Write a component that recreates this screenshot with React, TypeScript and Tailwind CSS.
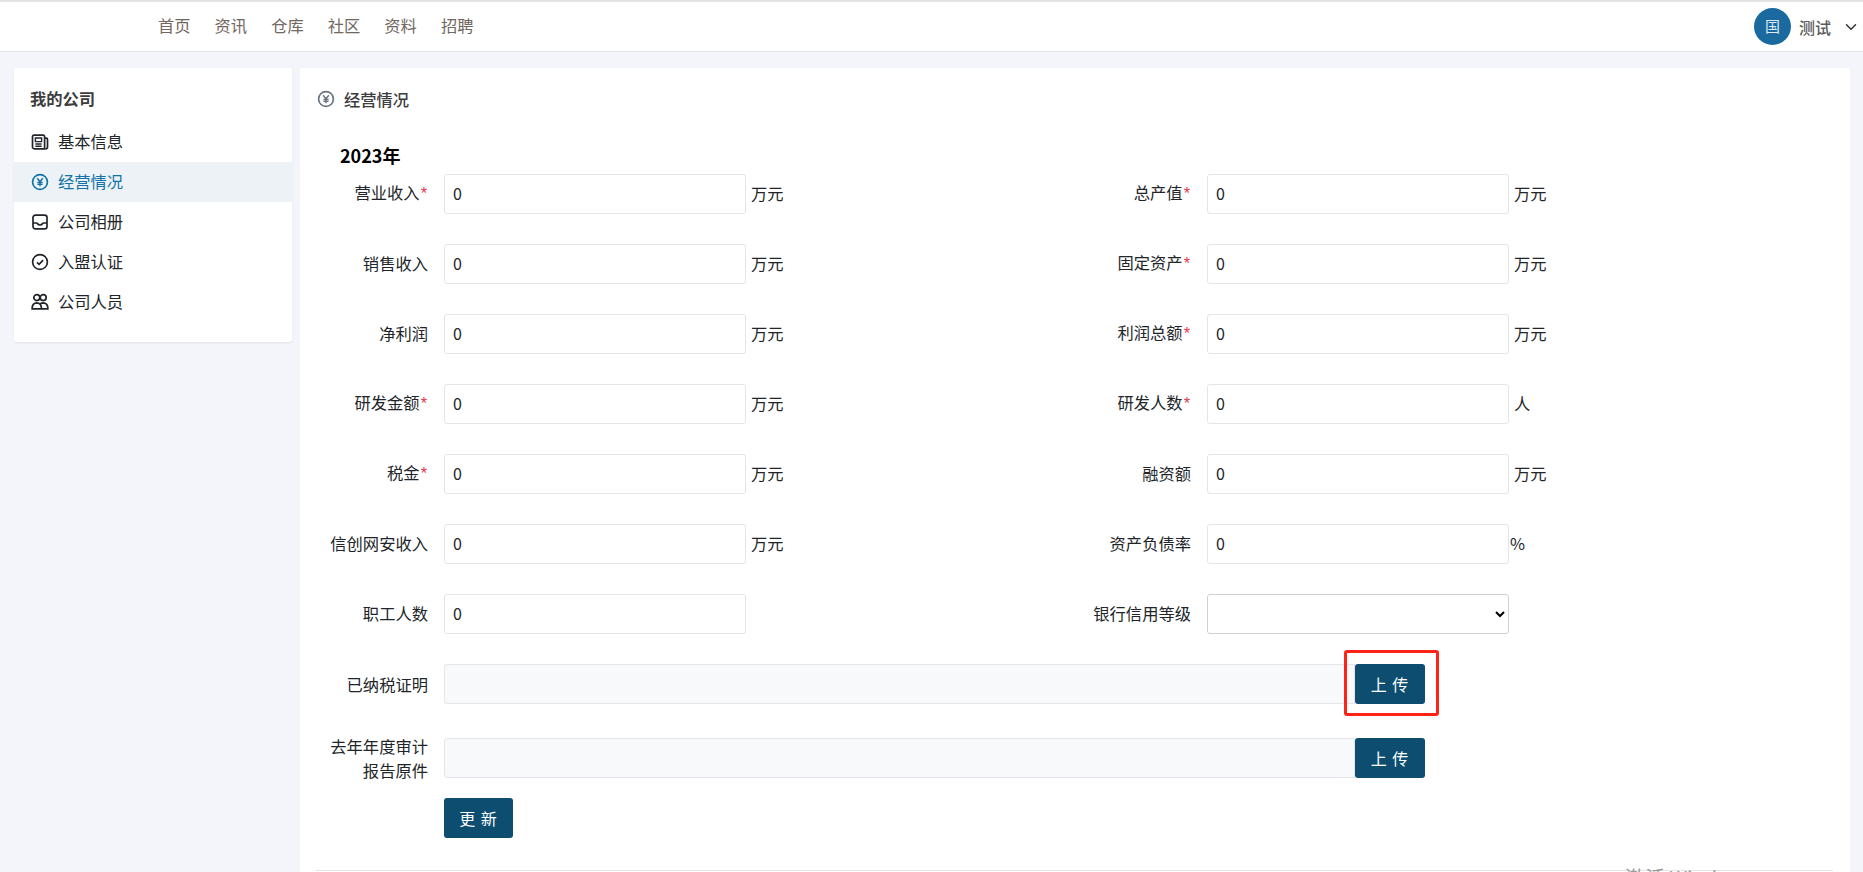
import { ChevronDown } from "lucide-react";

const cjk = "font-['Noto_Sans_CJK_SC','Open_Sans',sans-serif]";

const navItems = ["首页", "资讯", "仓库", "社区", "资料", "招聘"];

type IconProps = { className?: string };

const YenIcon = ({ className }: IconProps) => (
  <svg viewBox="0 0 18 18" fill="none" stroke="currentColor" strokeWidth="1.7" className={className}>
    <circle cx="9" cy="9" r="7.4" />
    <path d="M6.2 5.2 9 8.8l2.8-3.6M9 8.8v4.4M6.4 9.4h5.2M6.4 11.2h5.2" strokeWidth="1.4" />
  </svg>
);

const NewsIcon = ({ className }: IconProps) => (
  <svg viewBox="0 0 18 18" fill="none" stroke="currentColor" strokeWidth="1.7" className={className}>
    <path d="M13.6 15.8H3.4A1.9 1.9 0 0 1 1.5 13.9V3.6a1.4 1.4 0 0 1 1.4-1.4h9.3a1.4 1.4 0 0 1 1.4 1.4v12.2Zm0-10.6h1.6a1.3 1.3 0 0 1 1.3 1.3v7.4a1.9 1.9 0 0 1-1.9 1.9" />
    <path d="M4.4 5h6.2v3.6H4.4zM4.4 11h6.2M4.4 13.2h6.2" strokeWidth="1.4" />
  </svg>
);

const InboxIcon = ({ className }: IconProps) => (
  <svg viewBox="0 0 18 18" fill="none" stroke="currentColor" strokeWidth="1.7" className={className}>
    <rect x="2" y="2.2" width="14" height="13.6" rx="2.4" />
    <path d="M2 10h3.6c.9 0 1 2 3.4 2s2.5-2 3.4-2H16" />
  </svg>
);

const CheckIcon = ({ className }: IconProps) => (
  <svg viewBox="0 0 18 18" fill="none" stroke="currentColor" strokeWidth="1.7" className={className}>
    <circle cx="9" cy="9" r="7.4" />
    <path d="m5.9 9.4 2.2 2 4-4.2" />
  </svg>
);

const PeopleIcon = ({ className }: IconProps) => (
  <svg viewBox="0 0 18 18" fill="none" stroke="currentColor" strokeWidth="1.7" className={className}>
    <circle cx="5.8" cy="4.6" r="3" />
    <circle cx="12.2" cy="4.6" r="3" />
    <path d="M1.2 15.9v-1.6a5 5 0 0 1 4.6-4.4 5 5 0 0 1 4.6 4.4v1.6ZM10.4 15.9h6.4v-1.6a5 5 0 0 0-4.6-4.4c-1.1 0-2 .3-2.8.9" />
  </svg>
);

const sideItems = [
  { label: "基本信息", icon: NewsIcon },
  { label: "经营情况", icon: YenIcon, active: true },
  { label: "公司相册", icon: InboxIcon },
  { label: "入盟认证", icon: CheckIcon },
  { label: "公司人员", icon: PeopleIcon },
];

const rows = [
  [
    { label: "营业收入", required: true, unit: "万元" },
    { label: "总产值", required: true, unit: "万元" },
  ],
  [
    { label: "销售收入", unit: "万元" },
    { label: "固定资产", required: true, unit: "万元" },
  ],
  [
    { label: "净利润", unit: "万元" },
    { label: "利润总额", required: true, unit: "万元" },
  ],
  [
    { label: "研发金额", required: true, unit: "万元" },
    { label: "研发人数", required: true, unit: "人" },
  ],
  [
    { label: "税金", required: true, unit: "万元" },
    { label: "融资额", unit: "万元" },
  ],
  [
    { label: "信创网安收入", unit: "万元" },
    { label: "资产负债率", unit: "%" },
  ],
];

type FieldProps = { label: string; required?: boolean; unit?: string };

const Field = ({ label, required, unit }: FieldProps) => (
  <div className="flex w-[763px] items-center">
    <label className="w-[130px] pb-[2px] pr-4 text-right text-[16.3px] text-[#212529]">
      {label}
      {required && <span className="px-px font-['Liberation_Sans',sans-serif] text-[#e5354b]">*</span>}
    </label>
    <input
      readOnly
      value="0"
      className="h-10 w-[302px] rounded-[3px] border border-[#e3e5ea] bg-white px-2 pb-[2px] text-[16px] text-[#212529]"
    />
    {unit && (
      <span className={`pb-[2px] text-[16.3px] text-[#212529] ${unit === "%" ? "ml-px" : "ml-[5px]"}`}>{unit}</span>
    )}
  </div>
);

const UploadRow = ({ label }: { label: React.ReactNode }) => (
  <div className="flex items-center">
    <label className="w-[130px] pr-4 text-right text-[16.3px] leading-[24px] text-[#212529]">{label}</label>
    <div className="h-10 w-[911px] rounded-l-[3px] border border-[#e3e5ea] bg-[#f8f9fb]" />
    <button className="h-10 w-[70px] rounded-[3px] bg-[#0d4d70] text-[16px] tracking-[1px] text-white">上 传</button>
  </div>
);

export default function App() {
  return (
    <div className={`${cjk} relative h-[872px] overflow-hidden bg-[#f3f5fa]`}>
      <header className="flex h-[52px] items-center border-t-2 border-b border-t-[#e2e2e2] border-b-[#e3e5ea] bg-white pl-[158px] pr-[3px]">
        <nav className="flex gap-6 pb-[2px] text-[16.3px] text-[#71675e]">
          {navItems.map((item) => (
            <a key={item}>{item}</a>
          ))}
        </nav>
        <div className="ml-auto flex items-center">
          <div className="flex h-[37px] w-[37px] items-center justify-center rounded-full bg-[#1a6aa0] text-[15px] text-[#dfe9f2]">国</div>
          <span className="ml-2 text-[16px] font-medium text-[#5a5a5a]">测试</span>
          <ChevronDown className="ml-[11px] h-[18px] w-[18px] text-[#333]" />
        </div>
      </header>

      <div className="flex items-start gap-2 pl-[14px] pr-[13px] pt-4">
        <aside className="h-[274px] w-[278px] rounded-[3px] bg-white pt-[19px] shadow-[0_1px_2px_rgba(0,0,0,0.08)]">
          <h3 className="mb-[11px] pb-px pl-4 text-[16.3px] font-bold leading-[23px] text-[#3d3d3d]">我的公司</h3>
          {sideItems.map(({ label, icon: Icon, active }) => (
            <div
              key={label}
              className={`flex h-10 items-center pb-px pl-[17px] text-[16.3px] ${active ? "bg-[#edf2f6] text-[#1273a8]" : "text-[#212529]"}`}
            >
              <Icon className="mr-[9px] h-[18px] w-[18px]" />
              {label}
            </div>
          ))}
        </aside>

        <main className="h-[810px] flex-1 rounded-[3px] bg-white pl-[14px] pr-[10px] pt-[19px]">
          <div className="flex h-6 items-center pl-[3px] text-[16.3px] font-medium text-[#3d3d3d]">
            <YenIcon className="mr-[9px] h-[18px] w-[18px] text-[#6b7280]" />
            经营情况
          </div>
          <h4 className="mt-[32px] pl-[26px] text-[18px] font-bold leading-[24px] text-black">2023年</h4>
          <div className="flex flex-col gap-[30px] pt-[7px]">
            {rows.map((row) => (
              <div key={row[0].label} className="flex">
                <Field {...row[0]} />
                <Field {...row[1]} />
              </div>
            ))}
            <div className="flex">
              <Field label="职工人数" />
              <div className="flex w-[763px] items-center">
                <label className="w-[130px] pb-[2px] pr-4 text-right text-[16.3px] text-[#212529]">银行信用等级</label>
                <select className="h-10 w-[302px] rounded-[3px] border border-[#cfd1d6] bg-white px-1 text-[16px]">
                  <option></option>
                </select>
              </div>
            </div>
          </div>
          <div className="relative mt-[30px]">
            <UploadRow label="已纳税证明" />
            <div className="absolute left-[1030px] top-[-14px] h-[66px] w-[95px] rounded-[3px] border-[3px] border-[#ff2216]" />
          </div>
          <div className="mt-[30px]">
            <UploadRow label={<>去年年度审计<br />报告原件</>} />
          </div>
          <button className="ml-[130px] mt-4 h-10 w-[69px] rounded-[3px] bg-[#0d4d70] text-[16px] tracking-[1px] text-white">更 新</button>
          <div className="ml-[2px] mr-[7px] mt-[32px] border-t border-[#e3e5ea]" />
        </main>
      </div>

      <span className="absolute left-[1625px] top-[864px] text-[20px] leading-[28px] text-[#9a9a9a]">激活 Windows</span>
    </div>
  );
}
